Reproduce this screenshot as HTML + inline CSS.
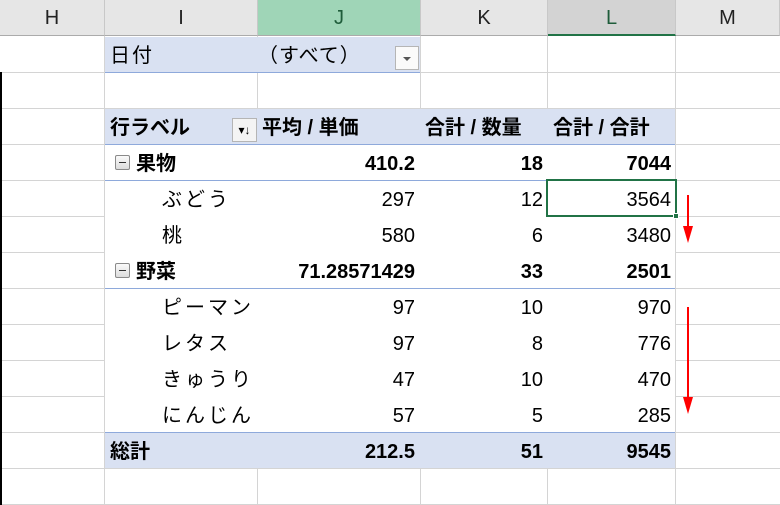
<!DOCTYPE html>
<html><head><meta charset="utf-8"><style>
*{margin:0;padding:0;box-sizing:border-box}
body{width:780px;height:505px;background:#fff;position:relative;overflow:hidden;font-family:"Liberation Sans","Noto Sans CJK JP",sans-serif;font-size:20px;color:#000}
.a{position:absolute}
.hd{top:0;height:36px;background:#e6e6e6;border-right:1px solid #c8c8c8;border-bottom:1px solid #ababab;text-align:center;line-height:36px;font-size:20px;color:#222}
.vl{position:absolute;width:1px;background:#d4d4d4}
.hl{position:absolute;height:1px;background:#d4d4d4}
.bl{position:absolute;height:1px;background:#8ea9db}
.t{position:absolute;height:36px;line-height:40px;white-space:nowrap}
.r{text-align:right}
.b{font-weight:bold}
.mi{position:absolute;width:15px;height:15px;border:1px solid #8a8a8a;background:linear-gradient(#fafafa,#dcdcdc);border-radius:2px}
.mi:after{content:"";position:absolute;left:3px;right:3px;top:6px;height:1px;background:#333}
</style></head><body>
<div class="vl" style="left:104px;top:36px;height:469px"></div>
<div class="vl" style="left:257px;top:36px;height:469px"></div>
<div class="vl" style="left:420px;top:36px;height:469px"></div>
<div class="vl" style="left:547px;top:36px;height:469px"></div>
<div class="vl" style="left:675px;top:36px;height:469px"></div>
<div class="hl" style="left:0;top:72px;width:780px"></div>
<div class="hl" style="left:0;top:108px;width:780px"></div>
<div class="hl" style="left:0;top:144px;width:780px"></div>
<div class="hl" style="left:0;top:180px;width:780px"></div>
<div class="hl" style="left:0;top:216px;width:780px"></div>
<div class="hl" style="left:0;top:252px;width:780px"></div>
<div class="hl" style="left:0;top:288px;width:780px"></div>
<div class="hl" style="left:0;top:324px;width:780px"></div>
<div class="hl" style="left:0;top:360px;width:780px"></div>
<div class="hl" style="left:0;top:396px;width:780px"></div>
<div class="hl" style="left:0;top:432px;width:780px"></div>
<div class="hl" style="left:0;top:468px;width:780px"></div>
<div class="hl" style="left:0;top:504px;width:780px"></div>
<div class="a" style="left:105px;top:145px;width:570px;height:287px;background:#fff"></div>
<div class="a" style="left:105px;top:37px;width:315px;height:35px;background:#d9e1f2"></div>
<div class="a" style="left:105px;top:109px;width:570px;height:35px;background:#d9e1f2"></div>
<div class="a" style="left:105px;top:432px;width:570px;height:36px;background:#d9e1f2"></div>
<div class="bl" style="left:105px;top:72px;width:315px"></div>
<div class="bl" style="left:105px;top:144px;width:570px"></div>
<div class="bl" style="left:105px;top:180px;width:570px"></div>
<div class="bl" style="left:105px;top:288px;width:570px"></div>
<div class="bl" style="left:105px;top:432px;width:570px"></div>
<div class="a" style="left:0;top:72px;width:2px;height:433px;background:#000"></div>
<div class="a hd" style="left:0;width:105px">H</div>
<div class="a hd" style="left:105px;width:153px">I</div>
<div class="a hd" style="left:258px;width:163px;background:#9fd5b7;color:#1e5c3a">J</div>
<div class="a hd" style="left:421px;width:127px">K</div>
<div class="a hd" style="left:548px;width:128px;background:#d3d3d3;border-bottom:2px solid #217346;color:#1e5c3a">L</div>
<div class="a hd" style="left:676px;width:104px">M</div>
<div class="t" style="left:110px;top:36px;letter-spacing:2px">日付</div>
<div class="t" style="left:258px;top:36px;letter-spacing:1px">（すべて）</div>
<div class="a" style="left:395px;top:46px;width:24px;height:24px;border:1px solid #b5b5b5;background:#fafafa"><div class="a" style="left:7px;top:10px;border-left:4px solid transparent;border-right:4px solid transparent;border-top:4px solid #555"></div></div>
<div class="t b" style="left:110px;top:108px">行ラベル</div>
<div class="a" style="left:232px;top:118px;width:25px;height:24px;border:1px solid #b5b5b5;background:#f4f4f4;font-size:12px;line-height:22px;text-align:center">▾↓</div>
<div class="t b" style="left:262px;top:108px">平均 / 単価</div>
<div class="t b" style="left:425px;top:108px">合計 / 数量</div>
<div class="t b" style="left:553px;top:108px">合計 / 合計</div>
<div class="mi" style="left:115px;top:155px"></div>
<div class="t b" style="left:136px;top:144px">果物</div>
<div class="t b r" style="left:258px;top:144px;width:157px">410.2</div>
<div class="t b r" style="left:421px;top:144px;width:122px">18</div>
<div class="t b r" style="left:548px;top:144px;width:123px">7044</div>
<div class="t" style="left:162px;top:180px;letter-spacing:3px">ぶどう</div>
<div class="t r" style="left:258px;top:180px;width:157px">297</div>
<div class="t r" style="left:421px;top:180px;width:122px">12</div>
<div class="t r" style="left:548px;top:180px;width:123px">3564</div>
<div class="a" style="left:546px;top:179px;width:131px;height:38px;border:2px solid #217346"></div>
<div class="a" style="left:673px;top:213px;width:6px;height:6px;background:#217346;border:1px solid #fff"></div>
<div class="t" style="left:162px;top:216px">桃</div>
<div class="t r" style="left:258px;top:216px;width:157px">580</div>
<div class="t r" style="left:421px;top:216px;width:122px">6</div>
<div class="t r" style="left:548px;top:216px;width:123px">3480</div>
<div class="mi" style="left:115px;top:263px"></div>
<div class="t b" style="left:136px;top:252px">野菜</div>
<div class="t b r" style="left:258px;top:252px;width:157px">71.28571429</div>
<div class="t b r" style="left:421px;top:252px;width:122px">33</div>
<div class="t b r" style="left:548px;top:252px;width:123px">2501</div>
<div class="t" style="left:162px;top:288px;letter-spacing:3px">ピーマン</div>
<div class="t r" style="left:258px;top:288px;width:157px">97</div>
<div class="t r" style="left:421px;top:288px;width:122px">10</div>
<div class="t r" style="left:548px;top:288px;width:123px">970</div>
<div class="t" style="left:162px;top:324px;letter-spacing:3px">レタス</div>
<div class="t r" style="left:258px;top:324px;width:157px">97</div>
<div class="t r" style="left:421px;top:324px;width:122px">8</div>
<div class="t r" style="left:548px;top:324px;width:123px">776</div>
<div class="t" style="left:162px;top:360px;letter-spacing:3px">きゅうり</div>
<div class="t r" style="left:258px;top:360px;width:157px">47</div>
<div class="t r" style="left:421px;top:360px;width:122px">10</div>
<div class="t r" style="left:548px;top:360px;width:123px">470</div>
<div class="t" style="left:162px;top:396px;letter-spacing:3px">にんじん</div>
<div class="t r" style="left:258px;top:396px;width:157px">57</div>
<div class="t r" style="left:421px;top:396px;width:122px">5</div>
<div class="t r" style="left:548px;top:396px;width:123px">285</div>
<div class="t b" style="left:110px;top:432px">総計</div>
<div class="t b r" style="left:258px;top:432px;width:157px">212.5</div>
<div class="t b r" style="left:421px;top:432px;width:122px">51</div>
<div class="t b r" style="left:548px;top:432px;width:123px">9545</div>
<svg class="a" style="left:678px;top:190px" width="20" height="240" viewBox="0 0 20 240">
<line x1="10" y1="5" x2="10" y2="40" stroke="#f00" stroke-width="2"/>
<polygon points="5,36 15,36 10,53" fill="#f00"/>
<line x1="10" y1="117" x2="10" y2="210" stroke="#f00" stroke-width="2"/>
<polygon points="5,207 15,207 10,224" fill="#f00"/>
</svg>
</body></html>
